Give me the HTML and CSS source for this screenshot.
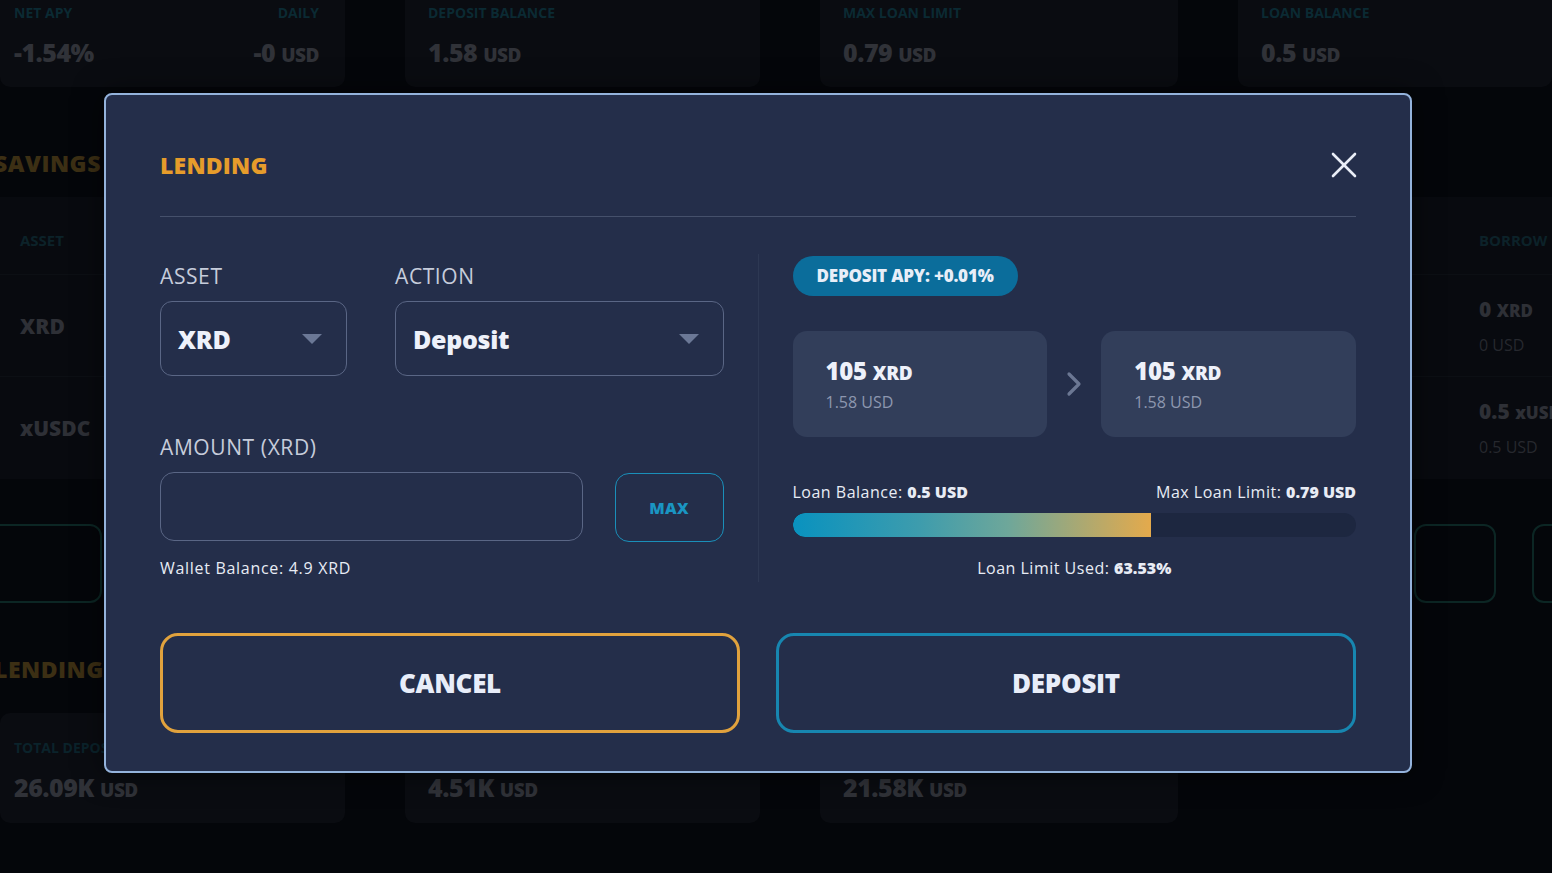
FILE: index.html
```html
<!DOCTYPE html>
<html lang="en">
  <head>
    <meta charset="UTF-8" />
    <meta name="viewport" content="width=device-width, initial-scale=1.0" />
    <title>Lending</title>
    <link rel="stylesheet" href="styles.css">
  </head>
  <body>
    <!-- dashboard behind the dialog (dimmed) -->
    <div class="dashboard">
      <div class="stats-row">
        <div class="stat-card stat-split">
          <div>
            <div class="stat-label">NET APY</div>
            <div class="stat-value">-1.54%</div>
          </div>
          <div class="stat-right">
            <div class="stat-label">DAILY</div>
            <div class="stat-value">-0 <small>USD</small></div>
          </div>
        </div>
        <div class="stat-card">
          <div class="stat-label">DEPOSIT BALANCE</div>
          <div class="stat-value">1.58 <small>USD</small></div>
        </div>
        <div class="stat-card">
          <div class="stat-label">MAX LOAN LIMIT</div>
          <div class="stat-value">0.79 <small>USD</small></div>
        </div>
        <div class="stat-card">
          <div class="stat-label">LOAN BALANCE</div>
          <div class="stat-value">0.5 <small>USD</small></div>
        </div>
      </div>

      <h3 class="section-title">SAVINGS</h3>
      <div class="asset-table">
        <div class="table-head">
          <span>ASSET</span>
          <span>BORROW</span>
        </div>
        <div class="table-row">
          <span class="asset-name">XRD</span>
          <div class="borrow-cell">
            <div class="borrow-amt">0 <small>XRD</small></div>
            <div class="borrow-usd">0 USD</div>
          </div>
        </div>
        <div class="table-row">
          <span class="asset-name">xUSDC</span>
          <div class="borrow-cell">
            <div class="borrow-amt">0.5 <small>xUSDC</small></div>
            <div class="borrow-usd">0.5 USD</div>
          </div>
        </div>
      </div>

      <div class="ghost-buttons">
        <div class="ghost-btn ghost-first"></div>
        <div class="ghost-btn ghost-second"></div>
        <div class="ghost-btn ghost-third"></div>
      </div>

      <h3 class="section-title lending-title">LENDING</h3>
      <div class="stats-row bottom-row">
        <div class="stat-card stat-first">
          <div class="stat-label">TOTAL DEPOSITS</div>
          <div class="stat-value">26.09K <small>USD</small></div>
        </div>
        <div class="stat-card">
          <div class="stat-label">&nbsp;</div>
          <div class="stat-value">4.51K <small>USD</small></div>
        </div>
        <div class="stat-card">
          <div class="stat-label">&nbsp;</div>
          <div class="stat-value">21.58K <small>USD</small></div>
        </div>
      </div>
    </div>

    <!-- lending dialog -->
    <div class="modal">
      <div class="modal-header">
        <h2>LENDING</h2>
        <button class="close-btn" aria-label="Close">
          <svg width="26" height="26" viewBox="0 0 26 26">
            <line x1="2" y1="2" x2="24" y2="24" stroke="#e9edf7" stroke-width="2.6" stroke-linecap="round" />
            <line x1="24" y1="2" x2="2" y2="24" stroke="#e9edf7" stroke-width="2.6" stroke-linecap="round" />
          </svg>
        </button>
      </div>

      <div class="modal-body">
        <div class="col-left">
          <div class="select-row">
            <div class="field field-asset">
              <label>ASSET</label>
              <div class="select">
                <span>XRD</span>
                <svg class="caret" width="20" height="10" viewBox="0 0 20 10"><polygon points="0,0 20,0 10,10" fill="#6b7896" /></svg>
              </div>
            </div>
            <div class="field field-action">
              <label>ACTION</label>
              <div class="select">
                <span>Deposit</span>
                <svg class="caret" width="20" height="10" viewBox="0 0 20 10"><polygon points="0,0 20,0 10,10" fill="#6b7896" /></svg>
              </div>
            </div>
          </div>

          <div class="field amount-field">
            <label>AMOUNT (XRD)</label>
            <div class="amount-row">
              <input type="text" class="amount-input" />
              <button class="max-btn">MAX</button>
            </div>
            <div class="wallet">Wallet Balance: 4.9 XRD</div>
          </div>
        </div>

        <div class="col-divider"></div>

        <div class="col-right">
          <div class="apy-pill">DEPOSIT APY: +0.01%</div>

          <div class="balance-cards">
            <div class="balance-card">
              <div class="bal-amt">105 <small>XRD</small></div>
              <div class="bal-usd">1.58 USD</div>
            </div>
            <svg class="chevron" width="16" height="26" viewBox="0 0 16 26">
              <polyline points="3,3 13,13 3,23" fill="none" stroke="#6b7793" stroke-width="3.2" stroke-linecap="round" stroke-linejoin="round" />
            </svg>
            <div class="balance-card">
              <div class="bal-amt">105 <small>XRD</small></div>
              <div class="bal-usd">1.58 USD</div>
            </div>
          </div>

          <div class="loan-info">
            <span>Loan Balance: <b>0.5 USD</b></span>
            <span>Max Loan Limit: <b>0.79 USD</b></span>
          </div>
          <div class="loan-bar">
            <div class="loan-fill" style="width: 63.6%"></div>
          </div>
          <div class="loan-used">Loan Limit Used: <b>63.53%</b></div>
        </div>
      </div>

      <div class="modal-actions">
        <button class="btn btn-cancel">CANCEL</button>
        <button class="btn btn-deposit">DEPOSIT</button>
      </div>
    </div>
  </body>
</html>
```

FILE: styles.css
```css
* {
  box-sizing: border-box;
}
body {
  margin: 0;
  width: 1552px;
  height: 873px;
  overflow: hidden;
  background-color: #04060a;
  font-family: "Open Sans", "Noto Sans", sans-serif;
  color: #e6eaf4;
  position: relative;
}

/* ---------- dimmed dashboard ---------- */
.stats-row {
  display: grid;
  grid-template-columns: 345px 355px 358px 1fr;
  column-gap: 60px;
  height: 87px;
}
.stat-card {
  background: #0a0c11;
  border-radius: 0 0 10px 10px;
  padding: 2px 14px 0 23px;
}
.stat-split {
  display: flex;
  justify-content: space-between;
  padding-left: 14px;
  padding-right: 26px;
}
.stat-right {
  text-align: right;
}
.stat-label {
  font-size: 14px;
  font-weight: 700;
  color: #0b2a33;
  height: 22px;
  line-height: 22px;
}
.stat-value {
  margin-top: 11px;
  font-size: 25px;
  font-weight: 800;
  color: #303238;
  letter-spacing: -0.5px;
}
.stat-value small {
  font-size: 19px;
}
.section-title {
  margin: 0;
  margin-left: -6px;
  padding-top: 60px;
  height: 112px;
  font-size: 23px;
  font-weight: 800;
  letter-spacing: 0.5px;
  color: #3c2f14;
}
.asset-table {
  background: #080a0f;
  height: 282px;
  margin-top: -2px;
}
.table-head {
  display: flex;
  justify-content: space-between;
  padding: 33px 0 0 20px;
  height: 77px;
  font-size: 15px;
  color: #0c2229;
  font-weight: 700;
}
.table-head span:last-child {
  width: 73px;
}
.table-row {
  display: flex;
  justify-content: space-between;
  align-items: center;
  height: 102px;
  padding-left: 20px;
  border-top: 1px solid #0c0f14;
}
.asset-name {
  font-size: 21px;
  font-weight: 800;
  color: #2e3036;
}
.borrow-cell {
  width: 73px;
}
.borrow-amt {
  font-size: 21px;
  font-weight: 800;
  color: #2e3036;
  white-space: nowrap;
  line-height: 28px;
}
.borrow-amt small {
  font-size: 17px;
}
.borrow-usd {
  font-size: 16px;
  color: #26282e;
  margin-top: 9px;
  line-height: 22px;
  white-space: nowrap;
}
.ghost-buttons {
  display: flex;
  margin-top: 45px;
  height: 79px;
}
.ghost-btn {
  border: 2px solid #0c2624;
  border-radius: 12px;
}
.ghost-first {
  width: 122px;
  margin-left: -20px;
}
.ghost-second {
  width: 82px;
  margin-left: auto;
}
.ghost-third {
  width: 60px;
  margin-left: 36px;
  margin-right: -40px;
}
.lending-title {
  padding-top: 50px;
  height: 110px;
}
.bottom-row {
  height: 110px;
}
.bottom-row .stat-card {
  border-radius: 10px;
  padding-top: 24px;
}
.bottom-row .stat-first {
  padding-left: 14px;
}
.bottom-row .stat-label {
  color: #0b232b;
}

/* ---------- modal ---------- */
.modal {
  position: absolute;
  top: 93px;
  left: 104px;
  width: 1308px;
  height: 680px;
  background: #242e4a;
  border: 2px solid #94b3dc;
  border-radius: 8px;
  padding: 51px 54px 0;
  box-shadow: 0 0 30px rgba(0, 0, 0, 0.5);
}
.modal-header {
  display: flex;
  justify-content: space-between;
  align-items: center;
  height: 38px;
  border-bottom: 1px solid #45506b;
  box-sizing: content-box;
  padding-bottom: 32px;
}
.modal-header h2 {
  margin: 0;
  font-size: 23px;
  font-weight: 800;
  color: #e69c2b;
  letter-spacing: 0.2px;
}
.close-btn {
  background: none;
  border: none;
  padding: 0;
  margin-right: -1px;
  display: flex;
}
.modal-body {
  display: grid;
  grid-template-columns: 1fr 1px 1fr;
  column-gap: 34px;
  padding-top: 45px;
  height: 402px;
}
.col-divider {
  background: #2d3853;
  height: 328px;
  margin-top: -8px;
}
.select-row {
  display: flex;
  gap: 48px;
}
.field label {
  display: block;
  font-size: 21px;
  color: #c6ccdb;
  letter-spacing: 0.6px;
  height: 29px;
  line-height: 29px;
  margin-bottom: 10px;
}
.field-asset {
  width: 187px;
}
.field-action {
  flex: 1;
}
.select {
  height: 75px;
  border: 1px solid #5a6685;
  border-radius: 12px;
  display: flex;
  align-items: center;
  justify-content: space-between;
  padding: 0 24px 0 17px;
}
.select span {
  font-size: 25px;
  font-weight: 800;
  color: #eef1fa;
  letter-spacing: -0.3px;
}
.amount-field {
  margin-top: 57px;
}
.amount-row {
  display: flex;
  gap: 32px;
}
.amount-input {
  flex: 1;
  height: 69px;
  background: transparent;
  border: 1px solid #5a6685;
  border-radius: 14px;
  outline: none;
}
.max-btn {
  width: 109px;
  height: 69px;
  margin-top: 1px;
  background: transparent;
  border: 1px solid #1a8fb9;
  border-radius: 14px;
  color: #1a95c2;
  font-family: inherit;
  font-size: 16px;
  font-weight: 800;
  letter-spacing: 0.3px;
}
.wallet {
  margin-top: 15px;
  font-size: 16px;
  color: #e8ecf5;
  letter-spacing: 0.7px;
}
.apy-pill {
  display: inline-block;
  height: 40px;
  line-height: 40px;
  padding: 0 24px;
  background: #0b6d9b;
  border-radius: 20px;
  font-size: 17px;
  font-weight: 800;
  color: #e8eef8;
  letter-spacing: -0.2px;
  margin-top: -6px;
}
.balance-cards {
  display: flex;
  align-items: center;
  gap: 19px;
  margin-top: 35px;
}
.balance-card {
  flex: 1;
  height: 106px;
  background: #323e5a;
  border-radius: 14px;
  padding: 24px 33px 0;
}
.bal-amt {
  font-size: 24px;
  font-weight: 800;
  color: #eef1fa;
  letter-spacing: -0.3px;
  line-height: 32px;
}
.bal-amt small {
  font-size: 19px;
}
.bal-usd {
  font-size: 16px;
  color: #8d97af;
  margin-top: 2px;
}
.loan-info {
  display: flex;
  justify-content: space-between;
  margin-top: 44px;
  font-size: 16px;
  color: #e8ecf5;
  line-height: 22px;
  letter-spacing: 0.5px;
}
.loan-info b,
.loan-used b {
  font-weight: 800;
  letter-spacing: 0;
}
.loan-bar {
  margin-top: 10px;
  height: 24px;
  background: #1d2740;
  border-radius: 12px;
  overflow: hidden;
}
.loan-fill {
  height: 100%;
  border-radius: 12px 0 0 12px;
  background: linear-gradient(90deg, #0992bf 0%, #3d9cad 35%, #6ea79a 60%, #e4aa4c 100%);
}
.loan-used {
  margin-top: 20px;
  text-align: center;
  font-size: 16px;
  color: #e8ecf5;
  letter-spacing: 0.5px;
}
.modal-actions {
  display: flex;
  gap: 36px;
  margin-top: 14px;
}
.btn {
  flex: 1;
  height: 100px;
  background: transparent;
  border-radius: 18px;
  font-family: inherit;
  font-size: 26px;
  font-weight: 800;
  color: #e8edf9;
  letter-spacing: -0.3px;
}
.btn-cancel {
  border: 3px solid #e1a23d;
}
.btn-deposit {
  border: 3px solid #1786b0;
}
```
